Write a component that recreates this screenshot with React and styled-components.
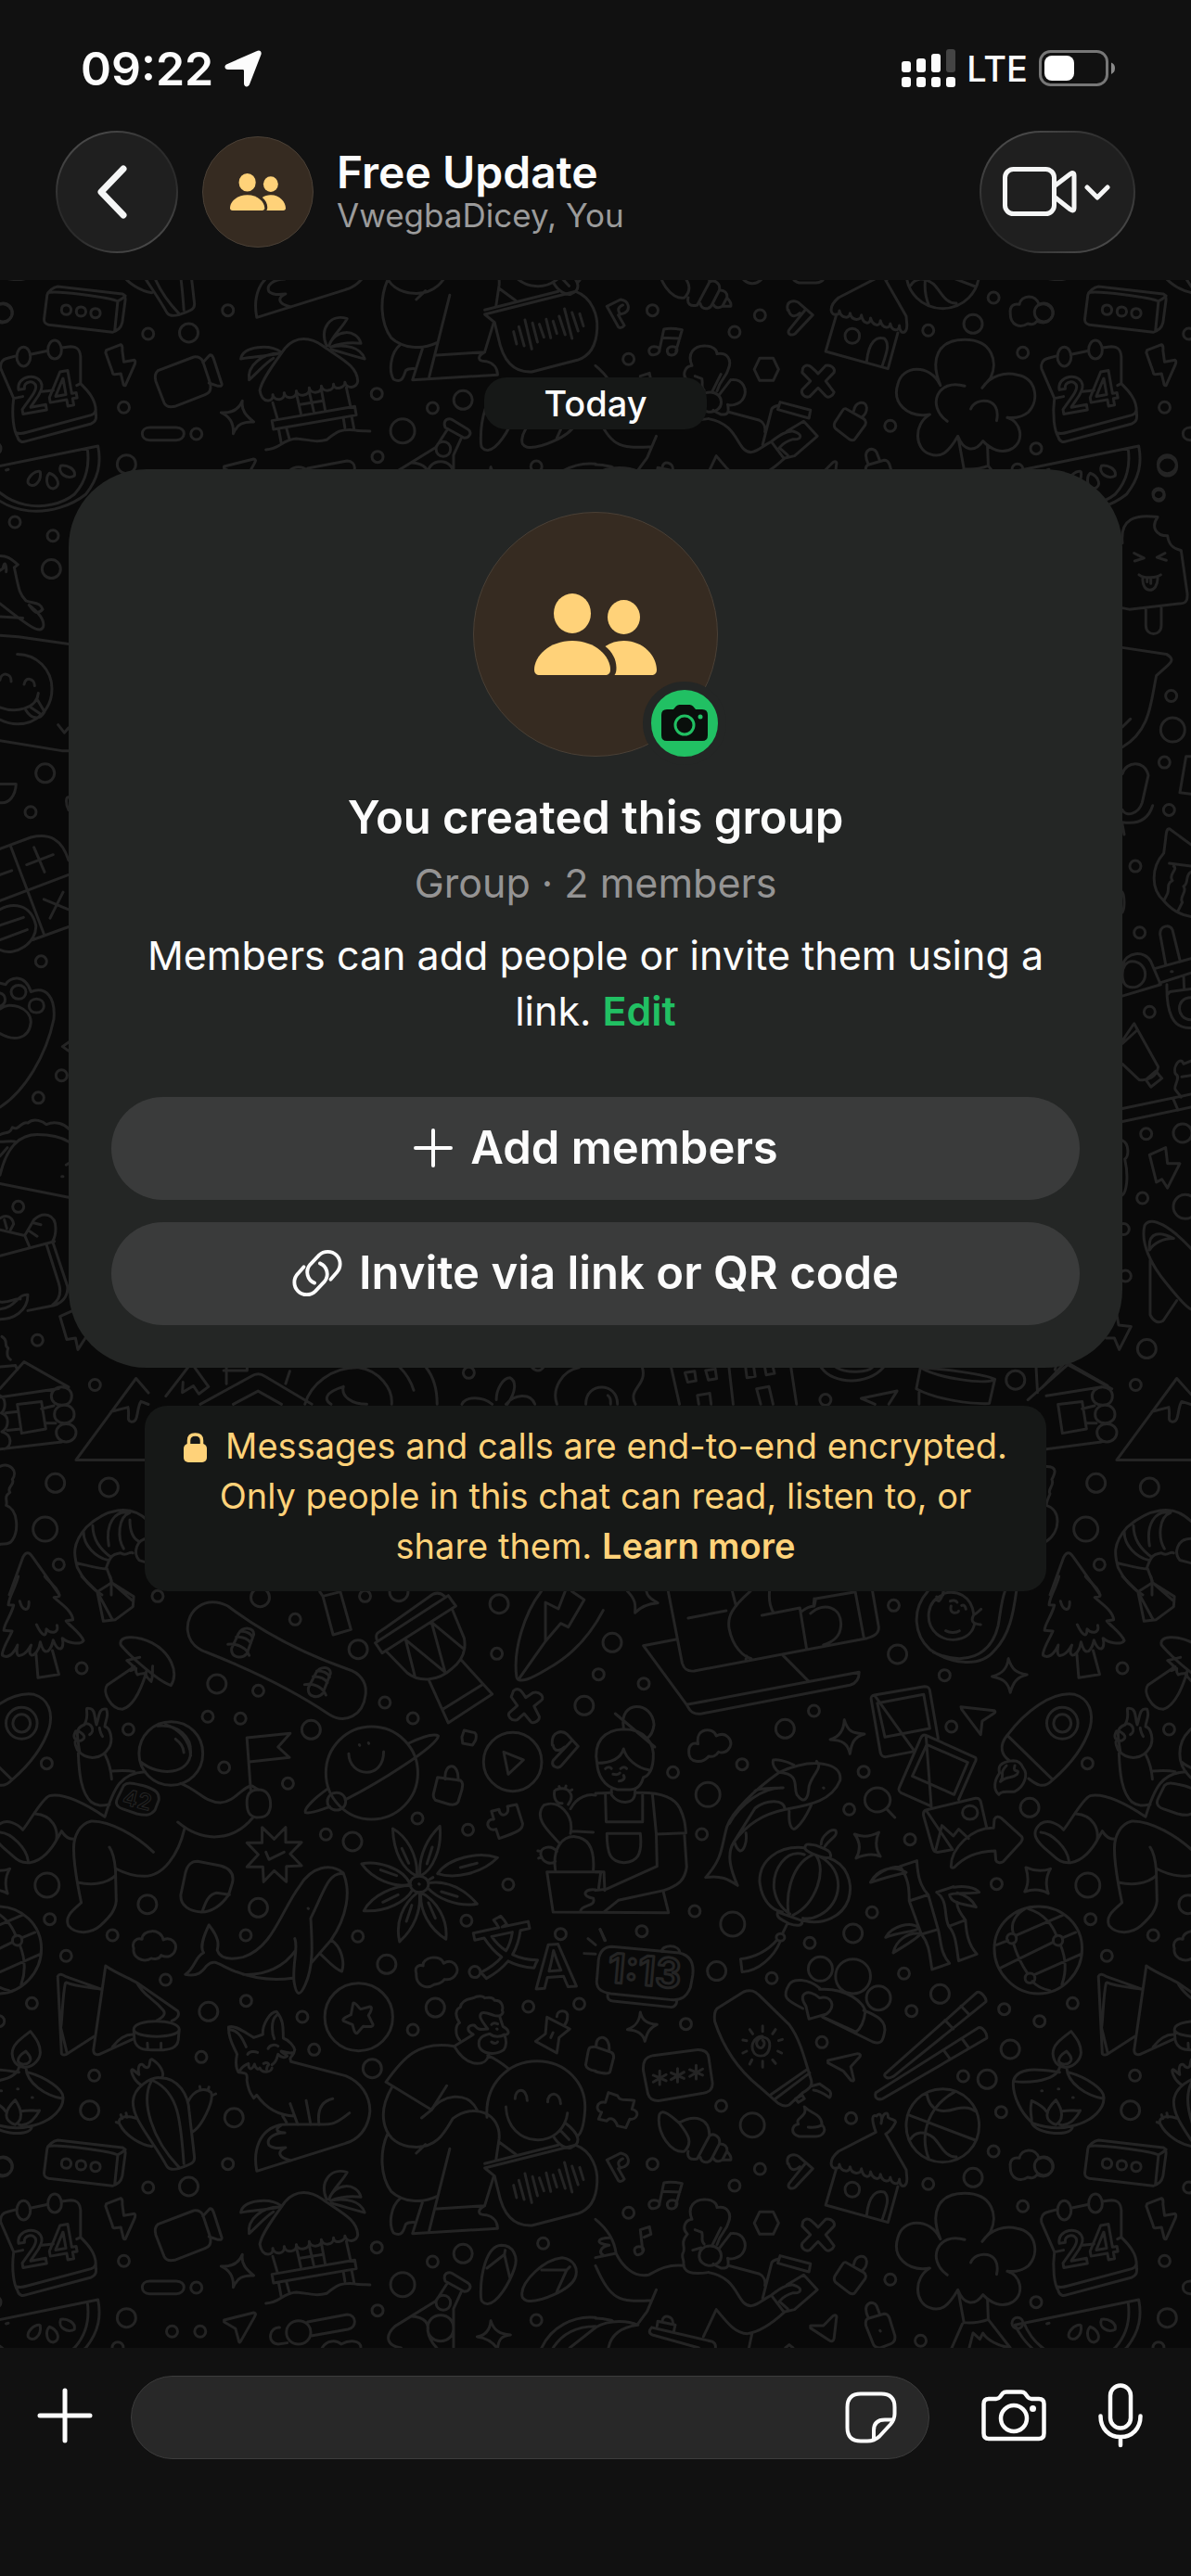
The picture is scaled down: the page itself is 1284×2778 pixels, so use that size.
import React from "react";
import styled, { createGlobalStyle } from "styled-components";

const GlobalStyle = createGlobalStyle`
  * {
    box-sizing: border-box;
  }

  body {
    margin: 0;
    background: #111111;
    color: #fcfcfc;
    font-family: Inter, "Liberation Sans", sans-serif;
  }

  button {
    border: none;
    padding: 0;
    background: none;
    color: inherit;
    font-family: inherit;
    cursor: pointer;
  }

  svg {
    display: block;
  }
`;

const Screen = styled.div`
  display: flex;
  flex-direction: column;
  min-height: 100vh;
`;

const TopBar = styled.header`
  background: #111111;
`;

const StatusBar = styled.div`
  display: flex;
  align-items: center;
  justify-content: space-between;
  height: 141px;
  padding: 6px 82px 0 87px;
`;

const StatusGroup = styled.div`
  display: flex;
  align-items: center;
  gap: 12px;
`;

const Clock = styled.time`
  font-size: 50px;
  font-weight: 600;
  line-height: 60px;
`;

const Network = styled.span`
  font-size: 38px;
  font-weight: 500;
  line-height: 48px;
`;

const NavBar = styled.nav`
  display: flex;
  align-items: center;
  height: 161px;
  padding: 0 60px 29px;
`;

const GlassButton = styled.button`
  display: flex;
  align-items: center;
  justify-content: center;
  gap: 8px;
  width: ${props => (props.$wide ? "168px" : "132px")};
  height: 132px;
  padding-right: ${props => (props.$wide ? "2px" : "10px")};
  border-radius: 66px;
  background: linear-gradient(#1f1f1f, #1f1f1f) padding-box,
    linear-gradient(150deg, #575757, #2b2b2b 40%, #2b2b2b 62%, #575757)
      border-box;
  border: 2px solid transparent;
  color: #f5f6f6;
`;

const Avatar = styled.div`
  display: flex;
  align-items: center;
  justify-content: center;
  width: ${props => props.$size}px;
  height: ${props => props.$size}px;
  border: 1px solid #4a4036;
  border-radius: 50%;
  background: #362b21;
  color: #ffd279;
`;

const NavAvatar = styled(Avatar)`
  margin: 0 25px 0 26px;
`;

const ChatInfo = styled.div`
  flex: 1;
`;

const ChatName = styled.h1`
  margin: 0;
  font-size: 48px;
  font-weight: 600;
  line-height: 50px;
`;

const ChatMembers = styled.p`
  margin: 0;
  color: #9b9b9b;
  font-size: 35px;
  line-height: 42px;
`;

const Chat = styled.main`
  position: relative;
  display: flex;
  flex: 1;
  flex-direction: column;
  align-items: center;
  padding: 105px 74px 80px;
  overflow: hidden;
  background: #090909;
`;

const Wallpaper = styled.svg`
  position: absolute;
  inset: 0;
  width: 100%;
  height: 100%;
  fill: none;
  stroke: #242424;
  stroke-width: 3;
  stroke-linecap: round;
  stroke-linejoin: round;
  font-family: Inter, "Noto Sans CJK SC", sans-serif;
  font-weight: 600;

  path {
    vector-effect: non-scaling-stroke;
  }
`;

const DayLabel = styled.div`
  position: relative;
  width: 240px;
  margin-bottom: 43px;
  border-radius: 24px;
  background: #161817;
  font-size: 38px;
  font-weight: 500;
  line-height: 56px;
  text-align: center;
`;

const GroupCard = styled.section`
  position: relative;
  display: flex;
  flex-direction: column;
  align-items: center;
  width: 100%;
  padding: 46px;
  border-radius: 84px;
  background: #242625;
  text-align: center;
`;

const AvatarWrap = styled.div`
  position: relative;
  margin-bottom: 34px;
`;

const PhotoButton = styled.button`
  position: absolute;
  right: -9px;
  bottom: -9px;
  display: flex;
  align-items: center;
  justify-content: center;
  width: 90px;
  height: 90px;
  border: 9px solid #242625;
  border-radius: 50%;
  background: #21c063;
`;

const CardTitle = styled.h2`
  margin: 0;
  font-size: 49px;
  font-weight: 600;
  line-height: 64px;
`;

const CardMeta = styled.p`
  margin: 8px 0;
  color: #959494;
  font-size: 43px;
  line-height: 60px;
`;

const CardText = styled.p`
  margin: 10px 16px 63px;
  font-size: 43px;
  line-height: 60px;
`;

const EditLink = styled.a`
  color: #21c063;
  font-weight: 600;
  text-decoration: none;
`;

const CardButton = styled.button`
  display: flex;
  align-items: center;
  justify-content: center;
  gap: 18px;
  width: 100%;
  height: 111px;
  padding-bottom: 2px;
  border-radius: 56px;
  background: #3a3b3b;
  font-size: 49px;
  font-weight: 600;

  & + & {
    margin-top: 24px;
  }
`;

const Notice = styled.p`
  position: relative;
  max-width: 972px;
  margin: 41px 0 0;
  padding: 16px 32px 22px;
  border-radius: 24px;
  background: #161817;
  color: #ffd279;
  font-size: 38px;
  line-height: 54px;
  text-align: center;

  svg {
    display: inline-block;
    margin-right: 20px;
    vertical-align: -4px;
  }

  a {
    color: inherit;
    font-weight: 600;
    text-decoration: none;
  }
`;

const Composer = styled.form`
  display: flex;
  align-items: center;
  padding: 30px 52px 126px 40px;
  background: #111111;
`;

const InputPill = styled.div`
  display: flex;
  flex: 1;
  align-items: center;
  height: 90px;
  margin: 0 56px 0 41px;
  padding: 0 34px;
  border: 1px solid #3c3c3c;
  border-radius: 45px;
  background: #282828;
`;

const MessageInput = styled.input`
  flex: 1;
  min-width: 0;
  height: 60px;
  border: none;
  outline: none;
  background: none;
  color: inherit;
  font-family: inherit;
  font-size: 42px;
`;

const BarButton = styled.button`
  padding-bottom: 4px;

  & + & {
    margin-left: 56px;
  }
`;

/* Wallpaper artwork. Each sheet has its own origin and scale, and its paths
   and dots are written in the units of that sheet. */

const sheets = [
  {
    x: 0,
    y: 1700,
    sx: 0.4095,
    sy: 0.3333,
    small: [
      [415, 64], [777, 139], [961, 64], [215, 297], [680, 370], [1308, 250],
      [1013, 408], [1087, 459], [547, 454], [633, 460], [338, 495], [123, 605],
      [590, 618], [758, 670], [1099, 783], [858, 835], [1232, 820],
      [131, 1109], [296, 1161], [174, 1228], [436, 1305], [647, 1161],
      [942, 1165], [1228, 1114], [1338, 997], [1250, 1280], [1476, 1157]
    ],
    medium: [
      [685, 68], [571, 348], [943, 236], [819, 496], [1050, 50], [1314, 89],
      [1538, 418], [928, 858], [388, 1061], [680, 1072], [1018, 1255]
    ],
    large: [[124, 999]],
    paths: [
      // pine tree
      "M48 0C40 40 24 62 22 92L36 93C28 130 10 155 10 175L32 177C22 205 4 238 6 255C18 266 34 256 46 222C42 250 46 258 52 256C66 254 74 240 82 222C74 250 80 258 88 254C98 246 104 232 106 212C112 240 118 246 126 242C136 232 138 218 140 206C146 226 152 236 160 234C168 228 166 212 164 200C176 214 210 224 220 208C214 186 184 160 174 144L192 140C190 110 156 84 142 68L156 64C156 40 130 20 118 0",
      "M52 80C58 112 78 118 76 82M96 156C108 188 122 204 122 170C132 186 156 186 150 158M95 252L100 328L155 317L138 240",
      // candy
      "M215 0L256 50L294 20L290 0M256 50L272 145L304 140L350 98L352 65L294 20M256 50L296 140M294 20L350 80",
      // mushroom
      "M318 222C310 190 360 190 400 215C448 246 472 310 450 353C420 342 345 262 318 222ZM368 262L334 272L350 290L344 305C370 290 350 300 362 318C378 310 382 320 386 306C380 322 390 330 398 340C404 322 400 304 402 290M354 292L282 352C268 374 292 430 322 430C352 420 372 362 384 315",
      // snowboard
      "M600 96C540 60 490 110 494 175C498 215 520 236 545 246C660 302 770 366 866 446C910 480 956 448 962 385C968 340 944 310 915 300C800 250 700 190 600 96Z",
      "M610 232L628 185C640 160 670 165 668 188L650 250C636 270 606 262 610 232ZM600 220C622 216 650 230 656 256M622 196C640 194 655 204 660 216M632 178C645 176 662 184 665 198M812 360L832 312C844 288 872 292 870 314L850 378C838 398 808 390 812 360ZM802 350C826 344 850 358 858 384M824 324C842 322 857 332 862 344M834 306C848 304 864 312 868 326",
      // drum
      "M988 215L1180 62L1200 96L1006 248ZM992 205C986 182 1000 180 1010 170L1130 66C1145 50 1160 52 1172 66M1015 240L1072 312C1100 340 1150 344 1190 298C1215 274 1228 240 1222 200L1190 105M1068 205L1092 322M1068 205L1172 310M1136 148L1172 310M1136 148L1222 236M1130 338L1180 474L1296 381L1214 270M1166 430L1270 350M842 50L850 64L896 50L924 172L877 189L850 64",
      // surfboard
      "M1425 48C1380 120 1350 240 1360 325C1365 350 1400 330 1440 300C1500 260 1550 200 1588 110M1488 48L1470 105L1436 84L1436 210L1366 332M1436 210L1476 152L1496 164L1538 76L1505 48",
      // astronaut
      "M210 570C200 500 200 490 222 480C240 440 216 420 238 428C252 432 248 460 254 480C262 450 260 424 280 430C288 450 276 470 276 486C290 490 300 530 286 556C270 590 230 600 204 562C192 530 198 530 212 532C236 520 210 500 200 500C190 520 196 530 212 532M222 478C240 470 252 500 236 512M262 490C262 500 268 515 270 518M206 572C208 640 214 700 240 730C255 744 270 742 288 738M276 575C286 600 292 620 294 656M294 630C330 626 340 628 354 632",
      "M450 470C498 470 534 515 534 573C534 630 498 676 450 676C404 676 366 630 366 573C366 515 404 470 450 470ZM415 484C470 478 504 520 502 570C500 640 420 650 370 600M436 480C470 492 500 530 502 580M462 526C476 540 482 550 484 570",
      "M382 632C320 636 300 680 276 778C230 740 170 700 130 710C110 720 80 790 60 820C46 800 20 785 0 800C-30 830 -10 860 20 890C40 910 50 930 80 926C110 920 135 885 150 850L162 824C170 840 180 852 196 850M92 768C140 772 154 820 148 855M0 828C30 830 70 880 74 920",
      "M476 670C520 690 540 732 580 732C620 730 640 676 664 678L680 690M666 780C620 850 540 870 468 795M486 815C470 900 430 970 380 970C350 970 330 962 304 945M404 892C360 840 290 790 240 792C210 800 194 840 194 880C194 940 206 1010 214 1056C190 1082 170 1100 180 1130C200 1160 240 1156 264 1130C290 1100 304 1080 306 1050L304 950C302 920 296 890 288 876M204 990C240 1000 280 996 304 968",
      "M660 690L650 522L764 508L732 552L762 586L656 600M650 730C650 700 664 690 680 690C702 690 714 710 712 745C708 780 690 780 675 780C655 776 650 760 650 730ZM326 676C336 664 350 670 380 678C410 690 420 700 418 724L408 756C396 776 380 774 360 768L322 752C304 744 304 730 310 716Z",
      // planet
      "M978 486C1046 486 1100 553 1100 636C1100 718 1046 786 978 786C912 786 858 718 858 636C858 553 912 486 978 486ZM918 574C920 650 1010 660 1010 567M864 686C830 716 800 750 804 764C820 770 850 752 868 746M910 722C1000 666 1150 550 1154 516C1140 506 1100 526 1076 540M946 545L947 547M970 539L971 541",
      "M886 700C900 700 910 712 910 728C910 744 900 756 886 756C872 756 862 744 862 728C862 712 872 700 886 700Z",
      // badge, sticker, clouds
      "M690 812L722 850L752 812L752 860L794 860L764 898L794 936L754 938L754 988L722 952L694 988L692 940L650 940L680 900L650 862L690 862ZM700 892L708 916L748 892",
      "M520 922L580 936C610 946 616 966 612 990L602 1030C585 1060 560 1085 530 1086C500 1084 474 1066 476 1030L488 960C494 930 505 922 520 922ZM604 1030L570 1024C546 1030 540 1060 532 1086",
      "M352 1204C345 1180 362 1168 374 1174C374 1142 424 1136 430 1176C450 1164 466 1186 462 1206C458 1228 440 1236 424 1226C420 1238 406 1240 398 1236C376 1252 348 1232 352 1204ZM1096 1285C1090 1262 1104 1255 1114 1260C1110 1232 1160 1220 1168 1252C1190 1234 1210 1262 1202 1284C1194 1304 1180 1306 1170 1304C1160 1320 1150 1318 1144 1320C1120 1340 1094 1320 1096 1285Z",
      // whale
      "M550 1128C534 1170 526 1200 536 1218C514 1230 512 1270 488 1288C520 1296 532 1280 544 1260C560 1240 572 1250 590 1262C650 1300 710 1310 770 1300M550 1128C584 1180 572 1200 572 1210C580 1240 610 1240 640 1232C720 1200 740 1080 790 1000C820 940 870 925 904 960C924 1020 914 1100 872 1176L820 1250M900 962C862 960 850 1030 818 1106C822 1190 826 1260 804 1320C790 1360 780 1360 774 1310C770 1250 786 1200 776 1172M778 1210C750 1260 700 1292 640 1288M872 1176C900 1200 908 1250 900 1278C880 1270 860 1240 844 1222M811 1074L812 1075",
      // flower
      "M1104 970C1116 970 1128 980 1128 996C1128 1010 1118 1022 1104 1022C1090 1022 1080 1010 1080 996C1080 980 1090 970 1104 970ZM1103 995L1104 996M1098 970C1100 900 1070 840 1034 816C1036 890 1060 950 1098 970ZM1106 970C1100 900 1130 840 1158 808C1164 880 1140 950 1106 970M1152 962C1180 910 1260 890 1310 910C1270 960 1200 980 1152 962M1080 996C1060 940 990 920 952 930C980 980 1040 1010 1080 996M1082 1000C1040 1000 980 1030 958 1082C1020 1086 1070 1050 1086 1014M1128 992C1180 980 1230 1020 1256 1060C1200 1070 1150 1040 1126 1008M1100 1022C1060 1060 1040 1120 1052 1182C1090 1140 1110 1080 1104 1022M1108 1022C1150 1050 1180 1110 1174 1174C1130 1140 1104 1080 1108 1022",
      "M1058 880L1076 928M1138 876L1124 930M1212 942L1256 928M1002 950L1044 968M1008 1054L1048 1030M1162 1020L1204 1036M1084 1064L1070 1116M1128 1056L1146 1106M1126 984L1140 974",
      // cross, play, lock, puzzle, hammer
      "M1352 370C1366 356 1374 372 1384 392L1404 376C1420 370 1434 390 1426 400L1406 420L1420 454C1420 470 1400 480 1396 468L1380 444L1362 464C1346 470 1334 450 1342 440L1362 418L1346 390Z",
      "M1350 505C1392 505 1426 548 1426 600C1426 652 1392 695 1350 695C1308 695 1273 652 1273 600C1273 548 1308 505 1350 505ZM1326 568L1378 594L1338 640ZM1172 656C1168 600 1210 600 1206 660M1152 650L1212 660C1220 668 1218 676 1216 690L1206 730C1200 742 1190 738 1184 738L1146 724C1140 716 1140 708 1142 700Z",
      "M1222 498L1250 506C1256 512 1254 520 1252 530L1244 546L1218 540L1216 520ZM1294 760L1314 754C1314 780 1344 778 1336 744L1360 738L1376 800C1376 820 1362 828 1314 848L1306 818C1280 828 1276 784 1300 786ZM1454 546C1450 500 1480 496 1494 512L1522 550L1478 612C1468 626 1450 614 1456 596L1506 530M1456 546C1460 574 1480 560 1486 552",
      // cactus pot
      "M1502 832C1512 770 1470 720 1432 740C1404 780 1440 820 1472 862M1502 752C1520 710 1550 704 1568 708M1506 824L1562 828M1462 950C1454 880 1480 840 1514 842C1550 846 1566 880 1562 950M1464 690C1500 676 1514 710 1496 738M1460 694C1456 720 1466 736 1480 734M1472 680L1474 686M1490 678L1488 686M1506 690L1498 696M1466 890C1450 866 1420 876 1424 902C1430 930 1452 932 1462 922M1416 888L1424 890M1418 912L1426 908M1440 956L1590 956L1592 1016M1440 956L1456 1086L1760 1088L1746 1018M1568 1014C1536 1010 1530 1036 1562 1042C1570 1070 1530 1060 1528 1084",
      // sparks beside the clock
      "M1548 1172L1568 1192M1538 1220L1568 1222M1580 1142L1592 1178"
    ]
  },
  {
    x: 642,
    y: 1700,
    sx: 0.4095,
    sy: 0.3333,
    small: [
      [785, 94], [127, 347], [8, 317], [575, 435], [919, 320], [937, 486],
      [386, 608], [204, 634], [706, 632], [668, 754], [280, 834], [828, 851],
      [1056, 995], [261, 1083], [728, 1087], [122, 1148], [564, 1186],
      [812, 1285], [464, 1300]
    ],
    medium: [
      [44, 214], [795, 252], [499, 493], [1143, 748], [678, 1155], [319, 1277]
    ],
    large: [[296, 706], [361, 1125], [592, 1270]],
    paths: [
      // laptop
      "M190 40L228 280C234 304 245 308 260 306L715 200C740 192 748 180 745 160L728 40M212 204L126 224L240 415C250 440 260 448 280 444L670 352C688 346 694 330 694 310L240 415M494 256L560 338M244 135L344 111M408 48C360 100 346 130 352 170C362 230 390 260 410 266M360 48L370 96M458 48C456 80 460 100 468 116M438 126L538 102L556 236M540 116C556 100 564 96 576 96L580 72L684 50L706 196M566 120C600 80 650 100 646 160C644 200 620 214 600 222M576 72L574 96M396 268L398 258",
      // sparkles
      "M84 48C110 80 104 100 104 118C120 96 140 88 164 86C140 70 136 60 134 48M655 464C654 500 640 520 618 528C650 530 664 540 670 574C674 540 680 520 708 510C674 508 664 500 655 464ZM1087 266C1084 300 1070 316 1044 324C1070 330 1086 340 1092 376C1100 340 1110 326 1136 318C1106 312 1096 300 1087 266ZM682 834C704 846 724 842 746 828C738 850 736 880 750 906C730 896 708 900 686 912C698 886 698 860 682 834ZM1133 942C1156 954 1176 956 1198 946C1186 970 1184 996 1192 1026C1170 1010 1150 1012 1130 1020C1142 994 1140 970 1133 942Z",
      // face
      "M875 48C830 110 840 190 880 236C930 280 1010 300 1050 240C1090 190 1100 120 1108 48M890 246C970 290 1040 260 1060 160C1066 120 1068 80 1078 48M915 60C870 80 866 150 898 186C930 220 990 208 998 152M898 66C900 90 910 80 916 48M915 56C950 44 990 60 996 124C1004 120 1010 112 1015 106M996 124C984 150 1000 154 1014 156M934 80C940 76 950 78 952 84M964 94C970 90 974 98 975 106M936 96C930 124 956 120 956 112M922 176C934 184 950 182 958 176",
      // cook
      "M74 490C60 400 150 400 154 480C152 500 146 515 136 524M52 444L156 552M4 604C-6 540 20 496 74 494C130 494 156 540 152 590C150 640 130 650 126 650C120 680 108 690 90 690L58 690C20 680 6 640 4 604C40 604 66 590 74 558C80 590 110 620 140 626M26 622C32 616 38 616 42 622M66 622C72 616 78 616 82 622M46 640C54 642 62 640 64 636M74 644C80 656 70 662 62 662M42 690L42 706C60 740 104 740 104 700L104 690",
      "M0 702L42 700M104 700C180 696 210 720 222 750C234 780 236 800 238 830L160 834L150 706M26 706L28 794L124 794L124 706M30 832L118 832C124 900 110 924 75 926C40 924 30 900 30 832ZM160 834L162 938L28 1012L0 1016M234 834L240 940C236 980 220 1000 180 1016L60 1048L24 1084M0 956L14 956L8 1012",
      // cloud, orca
      "M246 570C244 546 256 536 270 542C262 490 310 486 318 516C344 500 362 530 354 552C346 570 334 572 324 568C316 584 308 584 298 582C280 610 244 600 246 570Z",
      "M522 610C500 596 478 592 468 594C464 610 474 626 484 634C420 690 360 760 346 810C330 880 336 910 290 974C330 966 350 980 374 1000C356 950 344 900 364 860C400 800 440 770 500 754C560 740 620 730 644 660C650 600 570 586 484 634M494 684C440 680 380 740 352 800M494 684C460 686 430 684 420 694M364 860L420 750C450 720 500 720 498 754M484 634C540 640 520 680 530 706C550 740 560 720 562 680C570 640 600 620 582 598M510 760C508 800 516 830 530 812C550 790 560 760 568 740M396 830C400 860 390 890 380 888C370 880 368 866 366 860M600 684L601 685",
      // photos and arrow
      "M734 384L866 356C876 356 878 360 880 368L902 524M840 566L764 584C754 584 752 578 750 570L726 400C724 388 728 386 734 384ZM742 410L864 382L880 492L762 520ZM870 514L1000 586C1004 592 1000 600 998 604L956 722M884 744L804 700C796 694 798 688 800 682L856 524C860 512 866 512 870 514ZM872 544L980 602L944 706L834 646ZM870 756L1000 718C1010 716 1012 722 1014 728L1030 814M940 884L904 892C894 894 890 888 888 880L864 776C862 764 864 758 870 756ZM896 884L912 806L942 840L956 818L982 848M986 742C998 742 1006 752 1006 764C1006 776 998 786 986 786C974 786 966 776 966 764C966 752 974 742 986 742Z",
      "M936 938C936 880 990 812 1048 814L1050 786C1054 776 1062 776 1068 782L1122 842C1126 850 1124 854 1120 860L1074 922C1066 930 1056 926 1054 918L1052 888C1000 890 970 910 944 942C940 944 936 942 936 938ZM742 684C760 684 776 702 776 723C776 745 760 762 742 762C724 762 709 745 709 723C709 702 724 684 742 684ZM766 752L788 780",
      "M962 422L1050 434C1054 438 1052 442 1048 444L1018 468L1014 512L964 430Z",
      // rocket
      "M1084 514C1130 440 1200 370 1262 382C1300 396 1312 440 1302 490C1284 560 1240 620 1204 658ZM1084 514C1060 550 1070 580 1090 596M1204 658C1180 690 1160 674 1140 654M1229 424C1252 424 1270 447 1270 475C1270 503 1252 526 1229 526C1206 526 1188 503 1188 475C1188 447 1206 424 1229 424ZM1229 446C1242 446 1252 460 1252 475C1252 491 1242 504 1229 504C1216 504 1206 491 1206 475C1206 460 1216 446 1229 446ZM1100 596C1060 600 1060 620 1064 636C1050 660 1046 690 1062 706C1070 690 1090 700 1104 696C1130 680 1140 640 1126 620C1120 600 1110 596 1100 596ZM1082 612C1060 640 1080 640 1066 664C1090 640 1090 660 1110 640C1120 620 1096 640 1104 612",
      // lantern
      "M550 878C480 870 432 920 432 986C436 1040 460 1080 492 1086M616 912C660 930 680 990 666 1046C650 1100 600 1130 548 1114M550 900C500 880 466 950 470 1010C476 1060 496 1080 512 1092M570 902C520 930 500 1020 508 1090M580 902C610 950 580 1060 520 1096M590 906C660 950 650 1060 590 1096C570 1110 556 1108 546 1106M552 882C550 862 560 866 580 870C610 884 624 890 618 910C604 914 560 896 552 882ZM480 1086C474 1104 490 1110 510 1124C530 1132 546 1132 544 1114L484 1088ZM594 866C594 840 620 816 632 822C640 840 616 850 604 874M504 1126L492 1156M487 1156C494 1156 498 1162 498 1168C498 1174 494 1180 487 1180C480 1180 476 1174 476 1168C476 1162 480 1156 487 1156ZM478 1176C450 1216 420 1232 382 1238L386 1280C430 1276 470 1230 486 1182",
      // bamboo
      "M802 938L846 920C848 960 852 1000 876 1030L826 1050C826 1000 822 976 802 938ZM724 990C740 950 780 930 818 958C790 966 760 976 724 990M800 940C770 940 740 960 724 990M826 1050L858 1158L902 1142L876 1030M858 1158C880 1190 880 1230 886 1272L932 1252C908 1220 910 1180 902 1142M764 1168C780 1130 830 1116 850 1136C850 1150 800 1150 764 1168M784 1218C790 1180 820 1150 856 1156C850 1170 820 1190 784 1218M898 1022L942 1004M898 1022C930 1050 916 1100 930 1132L974 1112C960 1090 950 1070 952 1054M930 1132C950 1160 950 1200 956 1244L1004 1222C980 1190 976 1150 974 1112M944 1006C970 1000 1000 1006 1010 1022C980 1030 950 1020 932 1030C936 1060 970 1060 1002 1070C990 1040 970 1030 952 1024",
      // globe
      "M1166 1068C1230 1068 1281 1128 1281 1205C1281 1280 1230 1350 1166 1350C1102 1350 1050 1280 1050 1205C1050 1128 1102 1068 1166 1068ZM1056 1192L1086 1178M1106 1162L1230 1096M1100 1156C1090 1120 1110 1090 1130 1076M1140 1076C1180 1090 1204 1130 1214 1164M1232 1168L1264 1152M1068 1266L1204 1184M1154 1290L1278 1222M1100 1186C1110 1230 1124 1260 1138 1286M1224 1192C1240 1240 1240 1280 1228 1320M1150 1310C1164 1330 1180 1336 1196 1340M1096 1156C1104 1156 1108 1163 1108 1172C1108 1180 1104 1188 1096 1188C1088 1188 1083 1180 1083 1172C1083 1163 1088 1156 1096 1156ZM1218 1162C1226 1162 1230 1169 1230 1178C1230 1186 1226 1194 1218 1194C1210 1194 1205 1186 1205 1178C1205 1169 1210 1162 1218 1162ZM1144 1284C1152 1284 1157 1291 1157 1300C1157 1308 1152 1316 1144 1316C1136 1316 1131 1308 1131 1300C1131 1291 1136 1284 1144 1284Z",
      // alarm clock
      "M44 1198L220 1218C250 1226 260 1250 256 1290L250 1330C240 1360 226 1372 200 1370L40 1350C10 1344 0 1330 4 1300L8 1240C12 1210 24 1198 44 1198ZM174 1214C176 1190 220 1190 222 1218M32 1352C30 1366 36 1374 46 1374L200 1394C212 1392 214 1382 214 1372M12 1142L26 1178",
      // grapes
      "M678 1238C703 1238 724 1262 724 1294C724 1326 703 1350 678 1350C652 1350 632 1326 632 1294C632 1262 652 1238 678 1238Z"
    ]
  },
  {
    x: 0,
    y: 2120,
    sx: 0.4095,
    sy: 0.3333,
    small: [
      [84, 121], [648, 113], [796, 165], [530, 295], [248, 355], [827, 271],
      [1087, 207], [1391, 132], [1525, 123], [390, 717], [600, 641],
      [326, 955], [517, 1041], [453, 1183], [527, 1183], [992, 911],
      [1139, 957], [994, 1115], [1430, 898], [1412, 1146], [310, 1235]
    ],
    medium: [
      [549, 148], [980, 332], [236, 467], [616, 491], [497, 714], [1146, 135],
      [8, 648], [333, 1139], [1219, 931]
    ],
    large: [[1060, 1031]],
    paths: [
      // book
      "M152 34C156 24 164 28 172 34L268 76M152 34L162 284C168 292 174 288 180 282L248 228M172 56C164 100 164 180 160 200L176 280M174 54C200 68 240 70 268 76M278 0L246 272C246 288 256 290 266 284L352 236M278 0C300 20 340 40 360 54L468 146C474 160 466 172 452 178M360 54C380 100 400 100 430 144C440 160 420 172 414 176M352 222C330 220 310 240 296 262",
      // tea bowl, candle lamp
      "M352 206C352 170 470 170 472 206C470 236 354 236 352 206ZM352 206L354 240C360 270 380 272 400 272L430 272C456 270 470 260 470 230L472 206M388 250L389 270M424 250L424 270",
      "M80 212C50 240 32 256 32 284C34 316 50 330 68 328C90 326 106 300 106 280C106 256 98 240 80 212ZM68 276C50 290 46 300 48 310C54 322 76 322 80 304C82 292 72 284 68 276ZM50 328C40 380 -60 380 -72 372C-60 320 10 338 50 344M68 328C70 380 120 420 166 430C170 400 120 360 72 344M-72 372C-76 420 -50 480 -20 510C30 530 60 526 90 516C140 500 166 460 166 430M-24 496C-30 450 -24 450 -24 436C0 450 10 460 14 470M40 434C10 470 8 500 40 514C60 500 60 470 40 434ZM56 470C80 466 90 470 104 468C90 500 70 520 50 514M-24 500C-30 540 80 560 84 520M2 404L4 404M46 398L48 398M84 426L86 426",
      // cactus
      "M440 650C400 560 350 500 350 440C352 390 400 360 420 362C470 360 496 420 498 470L512 620C512 640 500 642 470 656C456 660 446 660 440 650ZM398 374C370 440 400 560 470 650M404 372C470 410 476 500 484 640M372 386C350 370 340 330 350 336L366 352C360 320 372 310 380 326C400 340 390 300 400 302C424 320 434 350 426 362M496 438C510 400 540 392 556 410C564 440 530 520 508 536M526 390L528 402M550 392L548 402M568 414L558 420M360 494C330 480 310 490 314 510C330 550 370 580 400 584M318 482L322 494M332 476L334 490M306 506L314 510",
      // password block
      "M152 564L322 588C330 592 330 598 330 606L322 680C318 700 310 706 296 712L128 688C116 684 116 676 116 670L124 592C126 580 140 566 152 564ZM126 584C150 576 290 600 310 612C320 604 326 600 330 594M310 612L302 708",
      "M174 624C182 624 187 631 187 640C187 648 182 655 174 655C166 655 162 648 162 640C162 631 166 624 174 624ZM213 630C221 630 226 636 226 645C226 653 221 660 213 660C205 660 201 653 201 645C201 636 205 630 213 630ZM251 635C259 635 264 641 264 650C264 658 259 665 251 665C243 665 239 658 239 650C239 641 243 635 251 635Z",
      // fox
      "M602 198C620 190 650 220 668 232L692 222C690 190 710 150 728 148C750 180 744 210 746 234C760 240 774 260 776 272C774 290 766 290 764 300L766 310L910 356C950 376 974 420 974 470C970 530 940 564 910 574L676 664C666 600 680 530 740 514C800 508 860 520 880 508C896 500 910 486 920 476M602 198C600 240 620 270 624 286C620 310 620 330 628 344C650 346 652 350 650 370C654 410 664 420 668 428L676 418C700 460 730 484 776 486M606 206C630 210 640 240 648 262M728 160C712 176 716 220 722 236M652 286C656 276 670 276 678 280M706 268C710 254 726 254 732 260M630 342C640 320 650 320 654 316C654 340 664 336 670 318C672 330 680 340 684 330C690 350 716 344 716 330M694 316C704 310 712 318 704 324L702 334M716 320C730 310 730 290 732 286C740 298 750 298 756 292C750 284 740 280 740 276C750 280 764 284 774 280M764 446L784 514M806 436L818 514M876 430C840 440 836 480 840 514M744 486L754 506M740 516C720 530 732 540 750 540C720 540 700 560 708 580C720 594 740 590 752 588C730 600 730 620 766 630",
      // star coin
      "M944 56C994 56 1034 105 1034 166C1034 226 994 275 944 275C894 275 855 226 855 166C855 105 894 56 944 56ZM930 120C936 116 946 140 950 140L974 132C982 132 976 150 970 160L982 190C982 200 970 196 956 196L940 218C934 222 930 200 928 190L904 178C900 172 910 166 924 158Z",
      // crouching man
      "M1210 240C1196 220 1200 190 1210 184C1196 160 1200 140 1212 134C1214 108 1240 106 1246 104C1256 96 1272 96 1276 104C1290 100 1300 104 1302 112C1320 110 1326 130 1322 144C1328 156 1316 166 1300 160C1290 156 1280 150 1270 152C1256 160 1270 180 1284 204C1250 210 1256 196 1248 192C1236 190 1230 200 1234 210C1240 220 1246 220 1246 222L1196 260C1100 240 1060 300 1016 376L1136 466L1176 388M1316 166L1324 196C1340 206 1344 222 1328 224C1334 240 1334 260 1326 272C1306 290 1270 286 1262 262C1256 234 1270 226 1290 220C1300 232 1320 230 1328 222M1294 190C1298 184 1304 184 1310 188M1308 204L1309 205M1294 246C1300 252 1308 252 1310 246M1196 260C1210 290 1230 314 1256 316C1280 316 1284 300 1286 290M1284 290C1310 304 1326 320 1338 332",
      "M1136 466L1110 492M1136 466C1160 420 1230 400 1256 466M1032 392C990 480 1006 580 1090 586C1150 590 1170 540 1192 494C1250 440 1320 480 1314 560L1306 626M1020 544C1000 600 1000 680 1030 730C1060 764 1110 770 1150 746M1120 578L1096 606M1184 592L1130 856M1150 786L1276 776L1300 680M1276 776C1256 790 1256 806 1280 806C1300 812 1310 830 1310 850L1086 866L1112 766M1054 752C1026 780 1024 840 1036 864C1060 880 1064 850 1068 836C1076 828 1086 830 1092 830M1314 570L1358 610",
      // grinning face
      "M1282 490C1276 380 1340 308 1414 308C1490 308 1544 380 1540 466C1538 510 1530 540 1522 550M1356 430C1356 396 1386 390 1388 436M1442 440C1442 406 1474 404 1476 446M1332 456C1336 590 1480 600 1494 476M1456 550C1470 580 1490 594 1504 588C1528 576 1530 548 1490 510M1478 536L1498 562",
      // voice note
      "M1276 640L1470 580M1516 580C1560 600 1574 660 1572 700C1570 760 1550 790 1520 802L1400 840C1340 844 1320 780 1312 730L1302 680L1276 654ZM1352 710L1360 750M1366 694L1380 756M1382 672L1400 766M1402 682L1415 744M1420 686L1432 728M1438 670L1450 730M1456 676L1466 716M1472 660L1488 720M1486 636L1506 732M1506 648L1522 708M1526 652L1536 692",
      // pushpin
      "M1440 166L1500 204L1472 232L1466 282L1410 244L1436 220ZM1466 164C1466 140 1496 140 1494 164C1494 180 1490 186 1486 192M1456 216L1450 232M1568 262C1550 262 1550 266 1548 280L1542 320C1544 334 1556 338 1568 340",
      // calendar
      "M44 788L20 796C4 800 0 816 2 830L36 926C30 980 36 1030 46 1050C50 1070 60 1068 70 1064L240 1008C254 1000 254 990 252 970C254 930 230 900 212 878L212 790C210 764 200 758 186 758L162 762M126 772L80 784M44 1038C54 1042 60 1040 70 1036L240 980C250 976 252 968 252 960M36 926L60 920M110 904L140 900M202 884L212 878",
      "M62 760C72 760 80 774 80 792C80 808 72 822 62 822C52 822 44 808 44 792C44 774 52 760 62 760ZM144 738C154 738 162 752 162 770C162 786 154 798 144 798C134 798 126 786 126 770C126 752 134 738 144 738Z",
      // bolt, video, pill
      "M280 770L318 752C324 756 322 764 322 772L326 808L354 802C358 806 356 810 354 818L330 884C326 886 324 880 324 876L318 846L302 848C298 848 296 844 296 840L278 778ZM416 836L510 792C524 790 530 796 534 806L554 880C556 900 552 908 540 914L460 952C444 956 436 950 432 940L410 870C406 850 410 842 416 836ZM534 810L552 786C558 784 560 790 562 796L584 880C584 888 580 886 574 886L550 876M394 1020L464 1020C492 1020 490 1061 464 1061L394 1061C368 1061 368 1020 394 1020Z",
      // beach hut
      "M684 900C690 860 730 800 750 764C780 720 820 730 850 756C900 800 940 820 942 870C940 894 912 896 908 874C910 890 880 904 878 880C880 904 850 908 846 886C850 910 818 914 814 892C818 918 784 924 780 902C784 926 752 932 748 908C752 934 722 936 718 914C722 938 690 946 684 900ZM718 940L730 990M912 892L922 948M716 998L934 952L938 980L720 1026ZM782 920L792 974M814 904L826 968M846 898L856 964M790 946L850 934M734 1028L740 1068M754 1022L762 1058M904 990L908 1020M926 986L932 1024M700 1092C740 1090 740 1060 780 1056C820 1060 830 1070 860 1060C890 1030 900 1026 930 1028C950 1034 960 1030 974 1032",
      "M740 776C710 750 640 756 634 798C670 790 700 790 736 780C690 780 650 820 656 866C680 840 700 810 720 796M860 756C840 700 870 650 914 668C900 700 876 720 866 756C880 700 940 700 950 748C920 744 890 750 870 760C910 750 950 760 960 798C930 790 900 776 872 768",
      // sparkles and plane
      "M638 934C630 960 610 974 582 972C604 984 616 1004 614 1040C624 1010 640 1000 668 1002C650 984 634 966 638 934ZM590 1146L668 1122C676 1124 672 1130 670 1136L634 1214C630 1222 628 1216 628 1210L620 1174L590 1152ZM1292 1148C1290 1180 1276 1196 1256 1200C1280 1204 1300 1220 1310 1240C1312 1210 1320 1196 1344 1194C1316 1192 1300 1180 1292 1148Z",
      // watermelon
      "M-68 1162L258 1080C266 1130 262 1180 226 1236C150 1310 0 1330 -68 1162ZM-44 1156C0 1290 130 1300 196 1236C230 1190 236 1140 230 1088M16 1158L22 1156",
      "M104 1162C90 1160 70 1184 74 1200C84 1220 110 1200 106 1164ZM130 1168C120 1180 120 1216 140 1218C164 1210 150 1176 130 1168ZM160 1144C150 1170 180 1190 196 1176C200 1154 176 1140 160 1144Z",
      // watch
      "M736 1170C710 1166 700 1220 732 1224L756 1220M816 1198L916 1176C940 1170 940 1130 914 1128L810 1152M786 1148C804 1148 818 1164 818 1186C818 1208 804 1224 786 1224C768 1224 754 1208 754 1186C754 1164 768 1148 786 1148ZM848 1236C860 1210 886 1210 898 1224C920 1210 950 1210 950 1236",
      // bottle, flip flops, shell
      "M1170 1010C1170 990 1186 990 1192 996L1232 1026C1244 1036 1236 1054 1222 1054L1172 1020ZM1176 1030L1148 1084L1040 1166C1010 1200 1020 1230 1056 1236M1214 1056L1194 1110L1194 1236M1084 1134C1120 1136 1130 1160 1126 1180C1130 1210 1140 1224 1150 1236M1167 1066C1178 1066 1186 1076 1186 1090C1186 1104 1178 1114 1167 1114C1156 1114 1148 1104 1148 1090C1148 1076 1156 1066 1167 1066ZM1160 1130C1180 1130 1194 1148 1194 1172C1194 1196 1180 1214 1160 1214C1140 1214 1126 1196 1126 1172C1126 1148 1140 1130 1160 1130Z",
      "M1266 1070C1264 1000 1280 906 1320 904C1350 904 1366 940 1354 980C1340 1030 1310 1090 1284 1094C1270 1092 1266 1084 1266 1070ZM1282 978L1328 934L1342 1008M1328 934L1330 920M1374 1060C1376 1020 1430 950 1480 944C1510 948 1524 980 1514 1010C1500 1050 1420 1090 1388 1084C1374 1078 1374 1070 1374 1060ZM1426 984L1492 984L1466 1054M1492 984L1500 974M1426 1236C1450 1170 1510 1130 1568 1138M1456 1236C1480 1190 1520 1166 1568 1166M1500 1236L1568 1170"
    ]
  },
  {
    x: 642,
    y: 2120,
    sx: 0.4095,
    sy: 0.3333,
    small: [
      [238, 188], [596, 247], [832, 146], [1076, 140], [1169, 179], [331, 453],
      [673, 493], [968, 357], [1068, 473], [150, 641], [433, 657], [366, 711],
      [1048, 600], [876, 706], [87, 799], [1125, 778], [776, 1015],
      [1160, 1088], [1111, 1156], [856, 1213]
    ],
    medium: [[907, 91], [1092, 270], [1031, 367], [994, 685]],
    large: [[413, 515], [745, 104]],
    paths: [
      "M118 150C116 180 106 196 84 206C110 208 126 220 130 244C136 216 142 200 162 190C136 188 122 176 118 150ZM2 262C-2 220 40 220 36 274M0 262L42 280C48 284 48 290 48 296L38 344C34 350 26 350 0 342",
      // password card
      "M152 290L264 272C288 270 296 280 298 296L308 380C308 400 300 408 284 412L170 436C150 438 142 430 138 414L126 340C124 310 130 296 152 290Z",
      "M169 340L169 384M152 354L186 372M186 352L152 376M216 332L216 376M199 346L233 364M233 344L199 368M265 322L265 366M248 336L282 354M282 334L248 358",
      // puzzle
      "M34 410L58 420C64 440 80 430 102 436L96 464C120 470 108 500 90 496L80 524L58 518C50 490 36 490 30 502L8 496L16 474C0 470 0 436 26 442Z",
      // sunscreen
      "M320 138L390 84C410 74 420 84 430 94L510 190C540 240 550 300 568 370C572 390 560 400 546 410L510 450C500 456 490 452 480 444L430 390C360 320 330 240 314 180C312 160 314 146 320 138ZM462 416L556 336M474 430L564 346M566 390L590 382L616 404C622 414 620 420 616 426C600 412 590 404 574 402M526 430L544 418L550 430L534 442ZM440 240C450 250 440 272 430 264C416 250 430 226 446 232C466 240 460 280 444 290C410 300 404 250 424 234C430 226 436 228 440 228",
      "M440 194L440 212M440 308L440 328M388 240L398 242M482 242L492 238M388 282L398 276M480 276L490 282M406 206L414 220M474 206L466 220M406 318L412 304M474 316L466 304",
      // cap and heart
      "M590 72C560 40 520 40 510 60C490 100 500 110 546 138M562 172L554 130C530 90 560 70 590 104C620 94 636 130 608 156ZM590 76C660 70 710 120 710 150C706 190 694 206 686 214M598 166L730 246C750 254 756 246 760 220C770 180 740 160 706 144M686 214L596 164",
      // paper plane and chopsticks
      "M612 306L690 284C698 284 698 290 696 294L672 326L680 368C680 374 674 372 672 370L652 340L612 314ZM762 350L1004 86C1014 80 1030 104 1028 116L784 358C770 368 758 360 762 350ZM962 130L984 158M920 176L942 204M738 410L1008 200C1020 196 1032 220 1030 234L756 430C740 436 734 424 738 410ZM964 234L982 264M916 272L934 302",
      // basketball
      "M914 398C968 398 1010 451 1010 517C1010 583 968 635 914 635C860 635 818 583 818 517C818 451 860 398 914 398ZM828 484L1000 564M948 406C880 450 850 540 878 626M872 412C880 480 920 474 950 462C980 454 990 464 1000 470M830 560C840 540 860 530 890 556C910 580 920 620 950 618",
      // seashell and cream
      "M168 482C174 464 190 476 220 508C240 540 260 570 234 600C200 610 160 540 168 482ZM220 508C260 480 300 490 300 550M244 600C240 620 250 630 268 624L300 550C310 540 330 550 326 576M276 620C280 640 300 640 306 624L326 576C340 574 348 586 346 600M310 622C316 636 326 634 334 628L346 600C354 610 358 620 356 628L334 628M550 456C570 480 596 480 596 514C610 530 600 552 580 552L536 552C512 544 516 516 534 512C524 490 560 490 550 456ZM560 522C580 524 590 520 596 514",
      // round hut
      "M738 538L640 600C610 630 620 660 634 654C640 656 642 650 642 642C646 668 670 670 670 650C674 676 700 676 700 656C704 686 724 690 724 666C730 692 750 696 750 674C756 704 776 700 776 684C780 710 800 710 800 690C800 720 820 720 820 690L818 660L764 544M738 538C724 490 730 480 740 486C750 470 756 490 752 510C756 470 772 470 770 490C780 500 790 496 790 506C780 530 770 540 764 544M634 656L606 774L770 830L796 714M714 806C720 740 740 726 760 732C776 750 766 780 754 824M676 700C687 700 695 710 695 724C695 738 687 748 676 748C665 748 657 738 657 724C657 710 665 700 676 700Z",
      // hammers and notes
      "M30 628L66 606C90 610 92 640 76 650L60 656L76 690C70 700 60 700 58 690ZM66 654C56 640 60 630 72 624M506 640C500 606 530 606 540 622L572 656L526 716C514 726 504 716 510 704L552 640M508 640C514 668 530 660 538 650M168 772L180 702C196 698 210 700 228 704L212 772M176 730L222 732M154 758C166 758 170 766 168 774C164 786 146 790 142 778C138 766 146 758 154 758ZM202 758C214 758 216 766 214 774C210 788 192 790 190 778C186 766 194 758 202 758ZM124 920L118 854L142 844L146 868L128 878M114 908C124 908 128 914 126 922C122 936 106 940 104 928C100 916 106 908 114 908Z",
      // hexagon and cross
      "M432 796L468 796L482 832L468 868L432 868L418 832ZM546 828C556 810 566 820 586 846L606 820C620 816 632 830 628 842L606 870L628 906C624 920 612 926 606 918L586 892L564 920C550 926 540 910 544 898L566 870L544 842Z",
      // listening woman
      "M254 820C240 780 260 754 290 756C310 756 320 770 320 782C346 776 360 800 350 830C344 860 330 860 320 902M254 820C236 822 226 850 242 868C220 900 240 910 230 930C226 940 232 950 232 960C230 990 250 1000 296 992M262 854L280 862C284 880 276 890 286 900M256 920L278 912M330 848L308 902M356 866L326 914M356 866C390 860 400 900 390 924C380 950 350 950 348 946C352 970 350 980 330 978C316 970 310 966 310 964M302 906C319 906 331 920 331 938C331 956 319 970 302 970C285 970 273 956 273 938C273 920 285 906 302 906Z",
      "M0 820C30 850 50 890 54 930L0 944M54 930C70 970 100 1010 140 1000C170 980 190 966 232 970M298 992C380 1010 370 1100 410 1100C430 1096 440 1080 460 1068C480 1050 500 1030 520 1032C550 1044 540 1060 520 1058C490 1070 490 1080 484 1086L506 1110M0 970C40 1080 60 1090 148 1082M160 1048L136 1118L112 1158M350 970L430 996C444 1004 448 1020 446 1034M440 1076L464 960C468 950 480 950 482 948M486 938L566 964L562 990L480 962ZM504 1032L548 1000L584 1048L524 1112L496 1120L464 1068M284 1200L318 1112C350 1160 370 1190 400 1190C440 1184 480 1140 496 1122M412 1190L404 1236",
      "M40 880C0 880 0 900 36 904C10 910 10 930 20 936M0 1140C20 1140 30 1144 44 1148M0 1170C40 1140 90 1150 112 1162C60 1170 40 1200 34 1236M148 1170L308 1216C318 1222 316 1230 316 1236M148 1170C140 1180 140 1190 150 1194L272 1236M162 1166L164 1150L210 1162L206 1184M176 1150C176 1126 206 1130 204 1160M500 1236L510 1226L520 1236",
      // tag, plane, padlock
      "M660 960L706 992C714 998 712 1006 710 1012L684 1056C680 1064 674 1062 668 1058L632 1024C626 1016 628 1010 630 1004L650 966C654 958 656 958 660 960ZM680 966C684 936 712 930 714 956C714 974 708 980 702 986M566 1164L600 1164L626 1132C634 1128 636 1134 634 1142L628 1206C626 1216 620 1216 616 1212L566 1172ZM718 1138C700 1090 730 1080 740 1100L748 1126M720 1140L760 1126C770 1126 772 1134 774 1140L788 1196C790 1210 784 1220 776 1224L750 1236C738 1236 732 1230 730 1220L712 1164C710 1150 712 1142 720 1140ZM749 1180L750 1182",
      // tree
      "M908 884C880 800 900 736 972 736C1046 736 1060 810 1040 860L1018 892C1040 850 1080 840 1110 850C1160 860 1170 930 1140 970C1120 990 1100 990 1084 988C1120 1000 1130 1060 1100 1086C1070 1110 1040 1090 1020 1064C1000 1100 970 1100 954 1048C930 1100 910 1120 880 1106C840 1090 836 1010 880 978C820 990 780 940 796 880C806 820 880 810 908 884M972 886C900 860 870 950 926 1000M988 960C1000 920 1070 920 1056 998M956 1060L970 1154C1000 1158 1020 1150 1034 1144L1032 1080M966 1158L938 1236M1034 1144L1092 1236C1060 1230 1030 1210 1020 1188L1012 1208L994 1188L984 1236",
      // cloud
      "M1092 650C1090 624 1104 618 1116 622C1120 590 1160 586 1168 624C1190 610 1210 640 1202 662C1190 690 1170 680 1162 676C1154 690 1146 686 1138 684C1118 700 1092 690 1092 650Z"
    ]
  }
];

const leftEdge = {
  x: 0,
  y: 500,
  sx: 0.3333,
  sy: 0.778,
  small: [
    [48, 81], [171, 100], [99, 483], [133, 690], [199, 848], [124, 879],
    [59, 1030], [121, 1215], [307, 1277], [190, 1526]
  ],
  medium: [[166, 146], [146, 429], [179, 1413], [352, 1419]],
  large: [[146, 1477]],
  paths: [
    "M0 128C30 128 40 134 58 140L46 144C60 170 60 180 84 190C110 194 130 192 138 202C120 210 110 206 94 196C130 208 144 218 140 226C130 236 100 228 0 194M0 212L74 214M10 144C14 134 22 140 20 150M0 148L14 144",
    "M0 238L60 240L222 250M0 384L200 398L222 398M56 264C120 264 168 286 168 312C168 340 120 361 56 361C34 361 14 358 0 355M0 300C4 288 38 290 36 302M78 306C82 294 112 298 112 308M0 338C50 346 120 340 124 318M84 342C100 354 130 356 144 344L122 328M100 338L128 346M188 362L208 373L222 366",
    "M0 444L52 444C50 460 30 472 0 470M222 462C212 462 212 472 222 480",
    "M0 534L100 518C160 512 200 520 222 550M0 606L222 570M34 530L142 652M0 674C50 684 120 664 116 640C100 610 40 608 0 618M106 660L222 642M86 556L172 542M110 532L144 566M142 604L222 618M204 594L162 630M0 570L38 564M0 640L76 629M0 660L88 646",
    "M0 720L18 722C30 712 80 706 100 732C150 724 180 740 174 770C150 820 80 870 0 892M0 756C30 744 100 754 100 774C94 800 40 800 0 790M60 723C74 723 84 727 84 732C84 738 74 742 60 742C46 742 36 738 36 732C36 727 46 723 60 723ZM118 742C132 742 142 746 142 752C142 757 132 761 118 761C104 761 94 757 94 752C94 746 104 742 118 742ZM0 734C20 736 24 748 0 752M222 802L202 808L222 814",
    "M0 930C20 926 30 930 40 920C60 926 70 910 90 914C110 906 140 912 150 916C180 910 210 916 222 922M0 986C20 950 60 930 120 930C160 930 200 934 222 940M0 940C20 940 40 938 52 940M0 998L222 1017M0 960L24 948M200 988L204 988M222 970L214 972",
    "M0 1062L80 1070L110 1048C140 1036 180 1040 180 1060C180 1070 176 1074 170 1078L218 1140C222 1154 200 1166 160 1168L90 1174M0 1098L176 1078M150 1082L190 1136C200 1150 190 1160 170 1166M80 1070L94 1084M96 1064L120 1071M106 1052L132 1055M0 1046C20 1040 40 1044 44 1054L34 1062M14 1048L22 1060M0 1172C50 1170 60 1150 90 1152C90 1176 40 1186 0 1186M0 1162C30 1164 50 1156 66 1158",
    "M6 1210C30 1216 10 1222 26 1226C20 1236 26 1240 34 1242M0 1282L78 1245L222 1280M0 1294L190 1282M0 1366L200 1356M0 1252L50 1250L56 1256M56 1304L134 1300L148 1338L70 1344ZM134 1310L174 1306M148 1330L180 1330M18 1316L58 1314M24 1340L68 1338M200 1280C220 1280 232 1286 232 1292C232 1300 220 1305 200 1305C180 1305 166 1300 166 1292C166 1286 180 1280 200 1280ZM208 1305C226 1305 240 1310 240 1318C240 1325 226 1330 208 1330C190 1330 176 1325 176 1318C176 1310 190 1305 208 1305ZM214 1331C232 1331 246 1336 246 1343C246 1350 232 1356 214 1356C196 1356 182 1350 182 1343C182 1336 196 1331 214 1331ZM0 1292C20 1296 20 1310 4 1316C32 1320 30 1336 6 1342C40 1346 40 1362 14 1366",
    "M194 1182L216 1214L244 1212L252 1228L276 1212M194 1182L236 1174M246 1381L440 1268L480 1288M246 1381L480 1381M360 1314L414 1308C420 1320 408 1326 424 1328C450 1330 440 1310 456 1300L480 1304",
    "M0 1390C30 1384 60 1396 40 1408C50 1416 20 1418 32 1426C10 1432 26 1438 20 1444C60 1450 60 1480 40 1492C30 1500 10 1496 0 1498M30 1568L74 1516C84 1508 94 1508 106 1516L192 1568",
    "M480 1466C420 1440 340 1450 280 1474C230 1498 240 1514 250 1530C270 1548 300 1560 330 1568M300 1472C300 1490 320 1504 360 1516M250 1524C290 1528 320 1532 344 1532M270 1480C270 1500 310 1516 350 1520M352 1500C340 1470 370 1450 420 1454C380 1460 380 1490 400 1504M420 1464C420 1480 430 1490 450 1494M344 1530C360 1510 370 1512 390 1510C410 1516 420 1506 430 1510M344 1530L360 1548L360 1568M480 1490C440 1490 430 1510 450 1520L480 1524"
  ]
};

const rightEdge = {
  x: 1124,
  y: 500,
  sx: 0.3333,
  sy: 0.778,
  small: [
    [376, 44], [416, 322], [394, 414], [409, 480], [300, 558], [314, 650],
    [346, 760], [335, 929], [323, 1018], [262, 1061], [268, 1126],
    [301, 1277], [184, 1526]
  ],
  medium: [[404, 4], [453, 928], [337, 1227], [173, 1413], [346, 1419]],
  large: [[421, 369], [462, 1030], [140, 1477]],
  paths: [
    "M372 74C300 70 250 76 258 110M372 74C350 88 366 100 404 100C408 112 420 118 448 120L468 180C470 192 460 194 440 194L280 202L258 200M334 202L334 224C334 240 384 240 384 224L384 200M296 124L328 131L298 135M396 124L370 130L400 134M312 154C330 160 370 158 382 154M324 158C320 182 374 180 372 158M338 158L338 164M350 160L350 166",
    "M258 255L400 264C424 270 420 274 404 280L368 294C350 330 350 370 258 393M258 365L284 354M258 430C270 412 330 410 342 432L322 470C310 486 270 490 258 480M356 474C340 496 300 500 258 497M258 500L264 514M258 594C266 600 266 616 258 622",
    "M480 528L410 506C400 506 400 512 398 520L392 540C350 560 350 590 392 606C420 620 450 626 480 628M410 554L480 558M424 558C440 562 404 570 420 578C400 582 410 590 404 596L392 606M480 566C460 570 474 582 456 586C470 594 440 600 452 608L438 620M480 406L464 406L444 456L480 458",
    "M258 696C270 676 330 674 350 690L382 722L258 738M290 690C314 690 332 698 332 708C332 718 314 726 290 726C270 726 258 720 258 708C258 698 270 690 290 690ZM398 694L380 652C380 640 410 638 420 646L444 688M362 700L480 686M378 720L480 706M416 704L420 704M402 722C400 760 420 784 480 782M404 736L412 732L480 728M456 710L458 728M480 740C430 740 430 770 480 771",
    "M258 800L296 776L374 836C370 850 340 856 312 854L258 832M258 804L304 786M334 854L366 842L386 852L350 864ZM258 894L480 874M258 912L480 892M422 880L438 896M480 828L456 832C446 820 420 836 430 846C450 850 420 864 430 868C440 874 446 876 448 878M480 848L450 850",
    "M258 938C280 942 280 960 266 964C280 990 270 1010 258 1014M346 958L398 948L404 970L444 970L404 1004L386 992L368 996ZM480 1088C420 1060 350 1040 330 1056C316 1080 350 1110 400 1136C430 1152 460 1168 480 1172M346 1090C340 1064 380 1064 424 1074C390 1074 360 1080 346 1090ZM348 1104L348 1180C360 1190 376 1192 390 1188L434 1160M206 1212L232 1212L248 1228L286 1196L246 1194L240 1180",
    "M0 1280L75 1245L210 1278M40 1256L44 1250M12 1292L190 1280M12 1366L190 1356M50 1304L128 1300L142 1338L64 1344ZM128 1310L168 1306M142 1330L174 1330M194 1280C214 1280 226 1286 226 1292C226 1300 214 1305 194 1305C174 1305 160 1300 160 1292C160 1286 174 1280 194 1280ZM202 1305C220 1305 234 1310 234 1318C234 1325 220 1330 202 1330C184 1330 170 1325 170 1318C170 1310 184 1305 202 1305ZM208 1331C226 1331 240 1336 240 1343C240 1350 226 1356 208 1356C190 1356 176 1350 176 1343C176 1336 190 1331 208 1331ZM240 1381L434 1268L480 1290M240 1381L480 1381M354 1314L408 1308C414 1320 402 1326 418 1328C444 1330 434 1310 450 1300L480 1304",
    "M12 1390C50 1390 40 1400 30 1408C40 1416 14 1422 24 1428C16 1436 12 1440 12 1444C60 1450 60 1480 12 1494M24 1568L68 1516C78 1508 88 1508 100 1516L186 1568M480 1466C420 1440 340 1450 274 1474C224 1498 234 1514 244 1530C264 1548 294 1560 324 1568M294 1472C294 1490 314 1504 354 1516M244 1524C284 1528 314 1532 338 1532M264 1480C264 1500 304 1516 344 1520M346 1500C334 1470 364 1450 414 1454C374 1460 374 1490 394 1504M338 1530C354 1510 364 1512 384 1510C404 1516 414 1506 424 1510M338 1530L354 1548L354 1568M480 1490C434 1490 424 1510 444 1520L480 1524"
  ]
};

const midBand = {
  x: 60,
  y: 1130,
  sx: 0.7423,
  sy: 0.3954,
  small: [[600, 886], [1118, 960]],
  medium: [[1394, 906]],
  large: [],
  paths: [
    "M160 950L192 872M185 912L184 940L200 922L208 944L222 924L202 872M210 972L284 896C292 886 298 888 304 896L372 972M258 972L294 936L328 972M248 872L248 916M278 872L278 880M244 880L276 880M340 882L334 916M362 972C370 920 400 870 440 872C470 880 490 930 488 972M418 924C390 940 390 960 400 972M418 924C414 950 430 972 452 972M500 872C510 890 516 910 520 934M538 872C550 900 554 940 554 972",
    "M590 972C596 950 620 950 634 972M640 960C640 930 650 900 660 900C670 910 668 940 656 972M654 972C666 944 690 940 696 972M692 872C698 884 704 882 708 872M728 972C720 930 736 880 760 872M852 872C860 920 830 930 842 972M770 972C770 910 816 910 816 972M802 948C806 954 806 960 806 972",
    "M894 872L906 972M978 872L984 972M1068 872L1076 972M914 886L928 882L930 908L918 912ZM944 880L958 876L960 902L948 906ZM932 948L950 942L952 972M932 948L934 972M1002 872L1004 900L1016 896L1014 872M1030 872L1032 892L1044 888L1042 872M1018 930L1036 924L1042 972M1018 930L1024 972M1112 872C1130 920 1180 920 1202 872M1134 872C1150 890 1180 884 1186 872M1170 956L1222 936L1210 972M1170 956L1190 972M1256 872C1290 876 1350 890 1364 904C1350 920 1280 900 1256 872L1250 930C1280 960 1330 972 1356 970L1364 904M1254 940L1254 972M1424 872L1426 940M1412 960L1470 864L1534 930"
  ]
};

const radii = { small: 6, medium: 10, large: 13 };

const Sheet = ({ sheet }) => (
  <>
    <g
      transform={`translate(${sheet.x} ${sheet.y}) scale(${sheet.sx} ${
        sheet.sy
      })`}
    >
      {sheet.paths.map(d => (
        <path key={d} d={d} />
      ))}
    </g>
    {Object.keys(radii).map(size =>
      sheet[size].map(([x, y]) => (
        <circle
          key={`${size}-${x}-${y}`}
          cx={sheet.x + x * sheet.sx}
          cy={sheet.y + y * sheet.sy}
          r={radii[size]}
        />
      ))
    )}
  </>
);

const tileOffsets = [
  [-1122, 0], [0, 0], [1122, 0],
  [-1122, -1999], [0, -1999], [1122, -1999]
];

// lettering on the calendar, the space suit, the clock and the loose glyphs
const labels = [
  { text: "24", x: 51, y: 2422, size: 52, turn: -10 },
  { text: "24", x: 1173, y: 2422, size: 52, turn: -10 },
  { text: "24", x: 51, y: 423, size: 52, turn: -10 },
  { text: "24", x: 1173, y: 423, size: 52, turn: -10 },
  { text: "42", x: 148, y: 1941, size: 24, turn: 14, thin: true },
  { text: "1:13", x: 695, y: 2125, size: 44, turn: 5 },
  { text: "文", x: 544, y: 2099, size: 66, turn: -12 },
  { text: "A", x: 598, y: 2120, size: 64, turn: -4 }
];

const ChatWallpaper = () => (
  <Wallpaper aria-hidden="true">
    <g transform="translate(0 -302)">
      {tileOffsets.map(([x, y]) => (
        <g key={`${x}-${y}`} transform={`translate(${x} ${y})`}>
          {sheets.map(sheet => (
            <Sheet key={`${sheet.x}-${sheet.y}`} sheet={sheet} />
          ))}
        </g>
      ))}
      {labels.map(({ text, x, y, size, turn, thin }) => (
        <text
          key={`${text}-${x}-${y}`}
          x={x}
          y={y}
          fontSize={size}
          strokeWidth={thin ? 1 : 3}
          textAnchor="middle"
          dominantBaseline="central"
          transform={`rotate(${turn} ${x} ${y})`}
        >
          {text}
        </text>
      ))}
      <Sheet sheet={leftEdge} />
      <Sheet sheet={rightEdge} />
      <Sheet sheet={midBand} />
    </g>
  </Wallpaper>
);

const LocationIcon = () => (
  <svg width="40" height="40" viewBox="0 0 40 40" fill="currentColor">
    <path d="M34.500 1.200C38 -.6 40.600 1.600 39.400 5L27 37C25.600 40.600 21 40 21 36V22.500C21 21.500 20.500 21 19.500 21H4C0 21-.8 16.800 2.600 15.200Z" />
  </svg>
);

const SignalIcon = () => (
  <svg width="58" height="42" viewBox="0 0 58 42" fill="currentColor">
    <rect x="0" y="13" width="10" height="12" rx="3" />
    <rect x="16" y="10" width="10" height="15" rx="3" />
    <rect x="32" y="5" width="10" height="20" rx="3" />
    <rect x="48" y="0" width="10" height="25" rx="3" fill="#444444" />
    <rect x="0" y="30" width="10" height="11" rx="3" />
    <rect x="16" y="30" width="10" height="11" rx="3" />
    <rect x="32" y="30" width="10" height="11" rx="3" />
    <rect x="48" y="30" width="10" height="11" rx="3" />
  </svg>
);

const BatteryIcon = () => (
  <svg width="82" height="40" viewBox="0 0 82 40">
    <rect
      x="1.5"
      y="1.5"
      width="72"
      height="36"
      rx="11"
      fill="none"
      stroke="#777777"
      strokeWidth="3"
    />
    <rect x="6" y="6" width="32" height="27" rx="8" fill="#ffffff" />
    <path d="M78 13.500Q82 15 82 19.500T78 26Z" fill="#8a8a8a" />
  </svg>
);

const BackIcon = () => (
  <svg width="34" height="58" viewBox="0 0 34 58" fill="none">
    <path
      d="M29 4L5 29L29 54"
      stroke="currentColor"
      strokeWidth="7"
      strokeLinecap="round"
      strokeLinejoin="round"
    />
  </svg>
);

const GroupIcon = ({ width }) => (
  <svg
    width={width}
    height={Math.round((width * 88) / 132)}
    viewBox="0 0 132 88"
    fill="currentColor"
  >
    <ellipse cx="41" cy="21.5" rx="20" ry="21.5" />
    <ellipse cx="96.5" cy="25.5" rx="17.5" ry="18.5" />
    <path d="M41 51C66 51 82 68 82 82C82 86 80 88 76 88H6C2 88 0 86 0 82C0 68 16 51 41 51Z" />
    <path d="M96.500 51C118 51 132 68 132 82C132 86 130 88 126 88H86.500C88 86 88.500 84 88.500 80C88.500 71 84 63 76.500 57C82 53 89 51 96.500 51Z" />
  </svg>
);

const VideoIcon = () => (
  <svg
    width="80"
    height="54"
    viewBox="0 0 80 54"
    fill="none"
    stroke="currentColor"
    strokeWidth="5"
    strokeLinejoin="round"
  >
    <rect x="2.5" y="2.5" width="53" height="48" rx="9" />
    <path d="M56 20.500L73 7.500Q77 5 77 9.500V44Q77 48.500 73 46L56 32.500" />
  </svg>
);

const ChevronIcon = () => (
  <svg width="28" height="17" viewBox="0 0 28 17" fill="none">
    <path
      d="M3 3L14 14L25 3"
      stroke="currentColor"
      strokeWidth="5"
      strokeLinecap="round"
      strokeLinejoin="round"
    />
  </svg>
);

const CameraBadgeIcon = () => (
  <svg width="50" height="40" viewBox="0 0 50 40">
    <path
      d="M6 5H13L16 1.500Q17.500 0 19.500 0H30.500Q32.500 0 34 1.500L37 5H44Q50 5 50 11V33Q50 39 44 39H6Q0 39 0 33V11Q0 5 6 5Z"
      fill="#0a0f0c"
    />
    <circle cx="25" cy="22" r="10" fill="none" stroke="#21c063" strokeWidth="3" />
    <circle cx="42" cy="13" r="2.5" fill="#21c063" />
  </svg>
);

const PlusIcon = ({ size, stroke }) => (
  <svg width={size} height={size} viewBox={`0 0 ${size} ${size}`} fill="none">
    <path
      d={`M${size / 2} 3V${size - 3}M3 ${size / 2}H${size - 3}`}
      stroke="currentColor"
      strokeWidth={stroke}
      strokeLinecap="round"
    />
  </svg>
);

const LinkIcon = () => (
  <svg
    width="54"
    height="54"
    viewBox="0 0 56 56"
    fill="none"
    stroke="currentColor"
    strokeWidth="4"
    strokeLinecap="round"
  >
    <path d="M13 21L6.500 28.500A13 13 0 0 0 26 48L36 37.500A13 13 0 0 0 31 17" />
    <path d="M43 35L49.500 27.500A13 13 0 0 0 30 8L20 18.500A13 13 0 0 0 25 39" />
  </svg>
);

const LockIcon = () => (
  <svg width="25" height="32" viewBox="0 0 25 32">
    <rect x="0" y="12" width="25" height="20" rx="5" fill="currentColor" />
    <path
      d="M5.500 14V8.500Q5.500 2 12.500 2T19.500 8.500V14"
      fill="none"
      stroke="currentColor"
      strokeWidth="3.5"
    />
  </svg>
);

const StickerIcon = () => (
  <svg
    width="56"
    height="56"
    viewBox="0 0 56 56"
    fill="none"
    stroke="currentColor"
    strokeWidth="4"
    strokeLinejoin="round"
  >
    <path d="M17 2.500H39Q53.500 2.500 53.500 17V24Q53.500 30 49 35.500L37 48.500Q31.500 53.500 24 53.500H17Q2.500 53.500 2.500 39V17Q2.500 2.500 17 2.500Z" />
    <path d="M53 30.500H43Q31 30.500 31 42V52" />
  </svg>
);

const CameraIcon = () => (
  <svg
    width="70"
    height="56"
    viewBox="0 0 70 56"
    fill="none"
    stroke="currentColor"
    strokeWidth="4.5"
    strokeLinejoin="round"
  >
    <path d="M8 10H16Q18.500 10 20 8L23 4Q24.500 2.500 27 2.500H43Q45.500 2.500 47 4L50 8Q51.500 10 54 10H62Q67.500 10 67.500 15.500V47Q67.500 53 62 53H8Q2.500 53 2.500 47V15.500Q2.500 10 8 10Z" />
    <circle cx="35" cy="31" r="14" />
    <circle cx="55.5" cy="20.5" r="3.5" fill="currentColor" stroke="none" />
  </svg>
);

const MicIcon = () => (
  <svg
    width="48"
    height="70"
    viewBox="0 0 48 70"
    fill="none"
    stroke="currentColor"
    strokeWidth="4.5"
    strokeLinecap="round"
  >
    <rect x="13" y="2.5" width="22" height="46" rx="11" />
    <path d="M2.500 35.500C2.500 49 11.500 58 24 58S45.500 49 45.500 35.500M24 58V67" />
  </svg>
);

const App = () => {
  return (
    <Screen>
      <GlobalStyle />
      <TopBar>
        <StatusBar>
          <StatusGroup>
            <Clock>09:22</Clock>
            <LocationIcon />
          </StatusGroup>
          <StatusGroup>
            <SignalIcon />
            <Network>LTE</Network>
            <BatteryIcon />
          </StatusGroup>
        </StatusBar>
        <NavBar>
          <GlassButton aria-label="Back">
            <BackIcon />
          </GlassButton>
          <NavAvatar $size={120}>
            <GroupIcon width={60} />
          </NavAvatar>
          <ChatInfo>
            <ChatName>Free Update</ChatName>
            <ChatMembers>VwegbaDicey, You</ChatMembers>
          </ChatInfo>
          <GlassButton $wide aria-label="Video call">
            <VideoIcon />
            <ChevronIcon />
          </GlassButton>
        </NavBar>
      </TopBar>
      <Chat>
        <ChatWallpaper />
        <DayLabel>Today</DayLabel>
        <GroupCard>
          <AvatarWrap>
            <Avatar $size={264}>
              <GroupIcon width={132} />
            </Avatar>
            <PhotoButton aria-label="Change group photo">
              <CameraBadgeIcon />
            </PhotoButton>
          </AvatarWrap>
          <CardTitle>You created this group</CardTitle>
          <CardMeta>Group · 2 members</CardMeta>
          <CardText>
            Members can add people or invite them using a link.{" "}
            <EditLink href="#edit">Edit</EditLink>
          </CardText>
          <CardButton>
            <PlusIcon size={44} stroke={4} />
            Add members
          </CardButton>
          <CardButton>
            <LinkIcon />
            Invite via link or QR code
          </CardButton>
        </GroupCard>
        <Notice>
          <LockIcon />
          Messages and calls are end-to-end encrypted. Only people in this chat
          can read, listen to, or share them. <a href="#learn">Learn more</a>
        </Notice>
      </Chat>
      <Composer onSubmit={e => e.preventDefault()}>
        <BarButton type="button" aria-label="Attach">
          <PlusIcon size={60} stroke={5} />
        </BarButton>
        <InputPill>
          <MessageInput type="text" aria-label="Message" />
          <button type="button" aria-label="Stickers">
            <StickerIcon />
          </button>
        </InputPill>
        <BarButton type="button" aria-label="Camera">
          <CameraIcon />
        </BarButton>
        <BarButton type="button" aria-label="Voice message">
          <MicIcon />
        </BarButton>
      </Composer>
    </Screen>
  );
};

export default App;
